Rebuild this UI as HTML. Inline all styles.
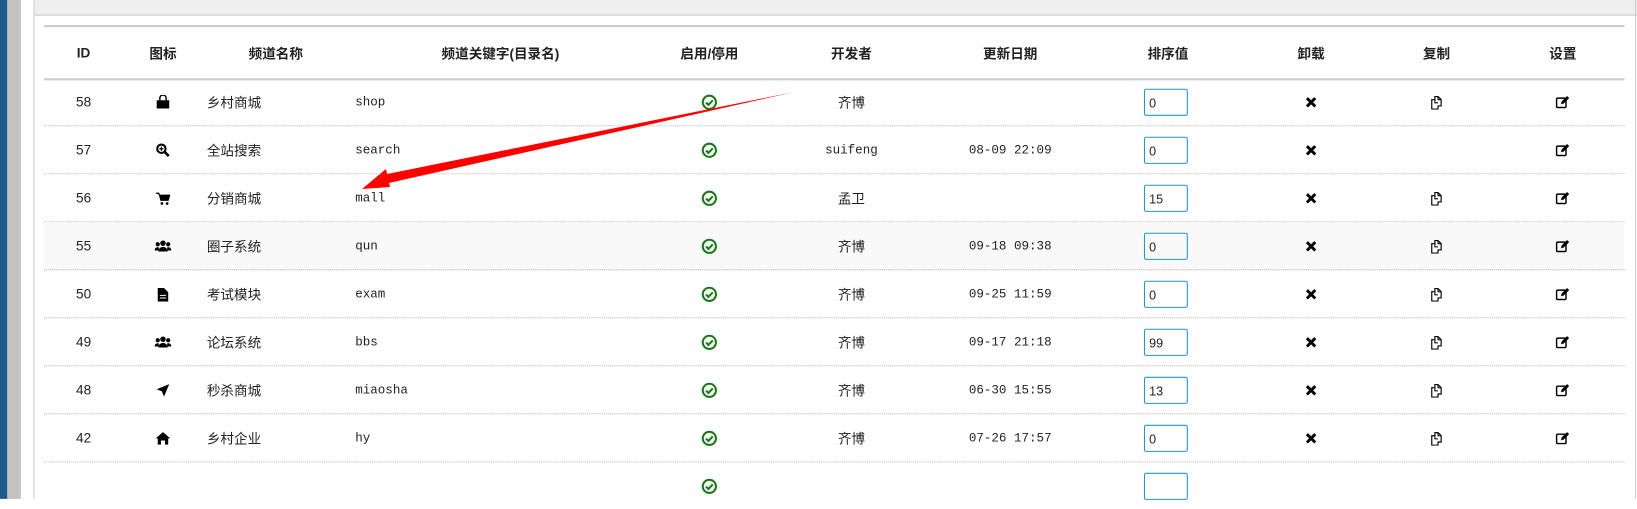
<!DOCTYPE html>
<html><head><meta charset="utf-8"><style>
body{margin:0;width:1637px;height:478px;overflow:hidden;background:#fff;font-family:"Liberation Sans","Noto Sans CJK SC",sans-serif;position:relative;color:#222}
#w{position:absolute;left:0;top:0;width:1567px;height:458px;transform:scale(1.0447,1.0437);transform-origin:0 0}
.blue{position:absolute;left:0;top:0;width:7px;height:478px;background:#1e5a8a}
.gray{position:absolute;left:7px;top:0;width:13px;height:478px;background:#c3c3c3}
.bl{position:absolute;left:32px;top:0;width:1px;height:478px;background:#ccc}
.hd{position:absolute;left:33px;top:0;width:1534px;height:14px;background:#eee;border-bottom:1px solid #ccc}
.rb{position:absolute;left:1565px;top:0;width:1px;height:478px;background:#ccc}
.thd{position:absolute;left:42px;top:24px;width:1513px;height:49px;border-top:2px solid #ccc;border-bottom:2px solid #ccc;font-weight:bold;font-size:13px}
.row{position:absolute;left:42px;width:1513px;height:45px;border-bottom:1px dotted #bbb;font-size:13px}
.row.alt{background:#f9f9f9}
.c{position:absolute;top:0;height:100%;display:flex;align-items:center;justify-content:center}
.c0{left:8px;width:60px}.c1{left:84px;width:60px}.c2{left:156px;width:100px;justify-content:flex-start}
.thd .c2{left:172px;width:100px;justify-content:center}
.c3{left:298px;width:200px;justify-content:flex-start}
.thd .c3{left:337px;width:200px;justify-content:center}
.c4{left:587px;width:100px}.c5{left:723px;width:100px}.c6{left:875px;width:100px}.c7{left:1026px;width:100px}
.c8{left:1163px;width:100px}.c9{left:1283px;width:100px}.c10{left:1404px;width:100px}
.m{font-family:"Liberation Mono",monospace;font-size:12px}
.inp{display:inline-block;width:42px;height:26px;border:1px solid #1a9bc6;border-radius:2px;line-height:26px;padding-left:4px;box-sizing:border-box;font-size:12px;margin-left:-4px}
</style></head><body>
<svg width="0" height="0" style="position:absolute"><defs>
<g id="ok"><circle cx="8" cy="8" r="6.3" fill="none" stroke="#1a7a1a" stroke-width="2"/><path d="M4.8 8.2l2.3 2.3 4.2-4.4" fill="none" stroke="#1a7a1a" stroke-width="2"/></g>
<g id="x"><path d="M2 2l8 8M10 2l-8 8" stroke="#000" stroke-width="2.8"/></g>
<g id="cp"><path d="M1.5 4.5h3v-3h3l3 3v6h-3v3h-6z" fill="#fff" stroke="#000" stroke-width="1.1"/><path d="M4.5 4.5v3h3M7.5 1.5v3h3" fill="none" stroke="#000" stroke-width="1"/></g>
<g id="ed"><rect x="1" y="3" width="9" height="9" rx="1" fill="none" stroke="#000" stroke-width="1.4"/><path d="M5 9l1-3 5-5 2 2-5 5z" fill="#000"/></g>
<g id="bag"><path d="M1 5h12v8h-12z" fill="#000"/><path d="M4 5v-2a3 3 0 0 1 6 0v2" fill="none" stroke="#000" stroke-width="1.4"/></g>
<g id="srch"><circle cx="5.5" cy="5.5" r="4" fill="none" stroke="#000" stroke-width="2"/><path d="M8.5 8.5l4 4" stroke="#000" stroke-width="2.5"/><path d="M3.5 5.5h4M5.5 3.5v4" stroke="#000" stroke-width="1.2"/></g>
<g id="cart"><path d="M0 2h3l2 7h7l1.5-5h-9.5" fill="#000" stroke="#000" stroke-width="1"/><circle cx="6" cy="12" r="1.3"/><circle cx="11" cy="12" r="1.3"/></g>
<g id="grp"><circle cx="8" cy="4" r="2.6"/><path d="M3.5 12a4.5 4.5 0 0 1 9 0z"/><circle cx="3" cy="5" r="2"/><circle cx="13" cy="5" r="2"/><path d="M0 11a3 3 0 0 1 4-3v3zM16 11a3 3 0 0 0-4-3v3z"/></g>
<g id="doc"><path d="M2 1h6l4 4v9h-10z" fill="#000"/><path d="M4 8h6M4 10.5h6" stroke="#fff" stroke-width="1"/></g>
<g id="plane"><path d="M13 1l-12 5 5 2 2 5z" fill="#000"/></g>
<g id="home"><path d="M7 1l7 6h-2v6h-3v-4h-4v4h-3v-6h-2z" fill="#000"/></g>
</defs></svg>
<div id="w">
<div class="blue"></div><div class="gray"></div><div class="bl"></div><div class="hd"></div><div class="rb"></div>
<div class="thd"><span class="c c0">ID</span><span class="c c1">图标</span><span class="c c2">频道名称</span><span class="c c3">频道关键字(目录名)</span><span class="c c4">启用/停用</span><span class="c c5">开发者</span><span class="c c6">更新日期</span><span class="c c7">排序值</span><span class="c c8">卸载</span><span class="c c9">复制</span><span class="c c10">设置</span></div>

<div class="row" style="top:75px"><span class="c c0">58</span><span class="c c1"><svg width="14" height="14"><use href="#bag"/></svg></span><span class="c c2">乡村商城</span><span class="c c3 m">shop</span><span class="c c4"><svg width="16" height="16"><use href="#ok"/></svg></span><span class="c c5">齐博</span><span class="c c6 m"></span><span class="c c7"><span class="inp">0</span></span><span class="c c8"><svg width="12" height="12"><use href="#x"/></svg></span><span class="c c9"><svg width="13" height="14"><use href="#cp"/></svg></span><span class="c c10"><svg width="14" height="13"><use href="#ed"/></svg></span></div>
<div class="row" style="top:121px"><span class="c c0">57</span><span class="c c1"><svg width="14" height="14"><use href="#srch"/></svg></span><span class="c c2">全站搜索</span><span class="c c3 m">search</span><span class="c c4"><svg width="16" height="16"><use href="#ok"/></svg></span><span class="c c5 m">suifeng</span><span class="c c6 m">08-09 22:09</span><span class="c c7"><span class="inp">0</span></span><span class="c c8"><svg width="12" height="12"><use href="#x"/></svg></span><span class="c c9"></span><span class="c c10"><svg width="14" height="13"><use href="#ed"/></svg></span></div>
<div class="row" style="top:167px"><span class="c c0">56</span><span class="c c1"><svg width="14" height="14"><use href="#cart"/></svg></span><span class="c c2">分销商城</span><span class="c c3 m">mall</span><span class="c c4"><svg width="16" height="16"><use href="#ok"/></svg></span><span class="c c5">孟卫</span><span class="c c6 m"></span><span class="c c7"><span class="inp">15</span></span><span class="c c8"><svg width="12" height="12"><use href="#x"/></svg></span><span class="c c9"><svg width="13" height="14"><use href="#cp"/></svg></span><span class="c c10"><svg width="14" height="13"><use href="#ed"/></svg></span></div>
<div class="row alt" style="top:213px"><span class="c c0">55</span><span class="c c1"><svg width="16" height="13"><use href="#grp"/></svg></span><span class="c c2">圈子系统</span><span class="c c3 m">qun</span><span class="c c4"><svg width="16" height="16"><use href="#ok"/></svg></span><span class="c c5">齐博</span><span class="c c6 m">09-18 09:38</span><span class="c c7"><span class="inp">0</span></span><span class="c c8"><svg width="12" height="12"><use href="#x"/></svg></span><span class="c c9"><svg width="13" height="14"><use href="#cp"/></svg></span><span class="c c10"><svg width="14" height="13"><use href="#ed"/></svg></span></div>
<div class="row" style="top:259px"><span class="c c0">50</span><span class="c c1"><svg width="14" height="14"><use href="#doc"/></svg></span><span class="c c2">考试模块</span><span class="c c3 m">exam</span><span class="c c4"><svg width="16" height="16"><use href="#ok"/></svg></span><span class="c c5">齐博</span><span class="c c6 m">09-25 11:59</span><span class="c c7"><span class="inp">0</span></span><span class="c c8"><svg width="12" height="12"><use href="#x"/></svg></span><span class="c c9"><svg width="13" height="14"><use href="#cp"/></svg></span><span class="c c10"><svg width="14" height="13"><use href="#ed"/></svg></span></div>
<div class="row" style="top:305px"><span class="c c0">49</span><span class="c c1"><svg width="16" height="13"><use href="#grp"/></svg></span><span class="c c2">论坛系统</span><span class="c c3 m">bbs</span><span class="c c4"><svg width="16" height="16"><use href="#ok"/></svg></span><span class="c c5">齐博</span><span class="c c6 m">09-17 21:18</span><span class="c c7"><span class="inp">99</span></span><span class="c c8"><svg width="12" height="12"><use href="#x"/></svg></span><span class="c c9"><svg width="13" height="14"><use href="#cp"/></svg></span><span class="c c10"><svg width="14" height="13"><use href="#ed"/></svg></span></div>
<div class="row" style="top:351px"><span class="c c0">48</span><span class="c c1"><svg width="14" height="14"><use href="#plane"/></svg></span><span class="c c2">秒杀商城</span><span class="c c3 m">miaosha</span><span class="c c4"><svg width="16" height="16"><use href="#ok"/></svg></span><span class="c c5">齐博</span><span class="c c6 m">06-30 15:55</span><span class="c c7"><span class="inp">13</span></span><span class="c c8"><svg width="12" height="12"><use href="#x"/></svg></span><span class="c c9"><svg width="13" height="14"><use href="#cp"/></svg></span><span class="c c10"><svg width="14" height="13"><use href="#ed"/></svg></span></div>
<div class="row" style="top:397px"><span class="c c0">42</span><span class="c c1"><svg width="14" height="14"><use href="#home"/></svg></span><span class="c c2">乡村企业</span><span class="c c3 m">hy</span><span class="c c4"><svg width="16" height="16"><use href="#ok"/></svg></span><span class="c c5">齐博</span><span class="c c6 m">07-26 17:57</span><span class="c c7"><span class="inp">0</span></span><span class="c c8"><svg width="12" height="12"><use href="#x"/></svg></span><span class="c c9"><svg width="13" height="14"><use href="#cp"/></svg></span><span class="c c10"><svg width="14" height="13"><use href="#ed"/></svg></span></div>
<div class="row" style="top:443px;border-bottom:none"><span class="c c4"><svg width="16" height="16"><use href="#ok"/></svg></span><span class="c c7"><span class="inp"></span></span></div>
</div>
<svg style="position:absolute;left:0;top:0" width="1637" height="478">
<polygon points="794,92 380,185 377,176" fill="#f00"/>
<polygon points="362,189 386,169 390,187" fill="#f00"/>
</svg>
</body></html>
